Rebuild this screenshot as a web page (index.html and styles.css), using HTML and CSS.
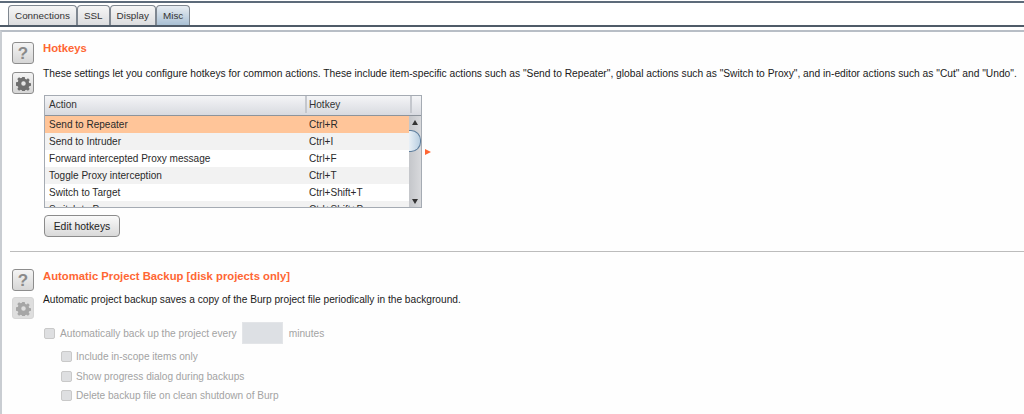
FILE: index.html
```html
<!DOCTYPE html>
<html lang="en">
<head>
<meta charset="utf-8">
<title>Misc settings</title>
<link rel="stylesheet" href="styles.css">
</head>
<body>
<div class="topline"></div>
<nav class="tabs">
  <span class="tab">Connections</span>
  <span class="tab">SSL</span>
  <span class="tab">Display</span>
  <span class="tab active">Misc</span>
</nav>
<main class="panel">
  <section class="section hotkeys">
    <div class="side">
      <div class="iconbtn"><span class="q">?</span></div>
      <div class="iconbtn">
        <svg class="gear" viewBox="0 0 16 16"><path fill-rule="evenodd" d="M6.700 1h2.600l.4 2 1.300.6 1.800-1.100 1.800 1.800-1.100 1.800.6 1.300 2 .4v2.600l-2 .4-.6 1.300 1.100 1.800-1.800 1.800-1.800-1.100-1.300.6-.4 2H6.700l-.4-2-1.300-.6-1.800 1.100-1.800-1.800 1.100-1.800-.6-1.300-2-.4V6.700l2-.4.6-1.300-1.100-1.800 1.800-1.800 1.800 1.100 1.300-.6zM8 5.600a2.400 2.400 0 1 0 0 4.800 2.400 2.400 0 0 0 0-4.800z"/></svg>
      </div>
    </div>
    <div class="content">
      <h2 class="title">Hotkeys</h2>
      <p class="desc">These settings let you configure hotkeys for common actions. These include item-specific actions such as "Send to Repeater", global actions such as "Switch to Proxy", and in-editor actions such as "Cut" and "Undo".</p>
      <div class="tablewrap">
        <div class="table">
          <div class="thead">
            <div class="th c1">Action</div>
            <div class="th c2">Hotkey</div>
            <div class="th c3"></div>
          </div>
          <div class="tbody">
            <div class="rows">
              <div class="row sel"><span class="c1">Send to Repeater</span><span class="c2">Ctrl+R</span></div>
              <div class="row alt"><span class="c1">Send to Intruder</span><span class="c2">Ctrl+I</span></div>
              <div class="row"><span class="c1">Forward intercepted Proxy message</span><span class="c2">Ctrl+F</span></div>
              <div class="row alt"><span class="c1">Toggle Proxy interception</span><span class="c2">Ctrl+T</span></div>
              <div class="row"><span class="c1">Switch to Target</span><span class="c2">Ctrl+Shift+T</span></div>
              <div class="row alt"><span class="c1">Switch to Proxy</span><span class="c2">Ctrl+Shift+P</span></div>
            </div>
            <div class="scrollbar">
              <div class="arrow up"></div>
              <div class="track"><div class="thumb"></div></div>
              <div class="arrow down"></div>
            </div>
          </div>
        </div>
        <div class="marker"></div>
      </div>
      <button class="btn" type="button">Edit hotkeys</button>
    </div>
  </section>
  <hr class="rule">
  <section class="section backup">
    <div class="side tight">
      <div class="iconbtn"><span class="q">?</span></div>
      <div class="iconbtn off">
        <svg class="gear" viewBox="0 0 16 16"><path fill-rule="evenodd" d="M6.700 1h2.600l.4 2 1.300.6 1.800-1.100 1.800 1.800-1.100 1.800.6 1.300 2 .4v2.600l-2 .4-.6 1.300 1.100 1.800-1.800 1.800-1.800-1.100-1.300.6-.4 2H6.700l-.4-2-1.300-.6-1.800 1.100-1.800-1.800 1.100-1.800-.6-1.300-2-.4V6.700l2-.4.6-1.300-1.100-1.800 1.800-1.800 1.800 1.100 1.300-.6zM8 5.600a2.400 2.400 0 1 0 0 4.800 2.400 2.400 0 0 0 0-4.800z"/></svg>
      </div>
    </div>
    <div class="content">
      <h2 class="title">Automatic Project Backup [disk projects only]</h2>
      <p class="desc short">Automatic project backup saves a copy of the Burp project file periodically in the background.</p>
      <div class="opt first"><span class="check"></span><span>Automatically back up the project every</span><span class="field"></span><span>minutes</span></div>
      <div class="opt sub"><span class="check"></span><span>Include in-scope items only</span></div>
      <div class="opt sub"><span class="check"></span><span>Show progress dialog during backups</span></div>
      <div class="opt sub"><span class="check"></span><span>Delete backup file on clean shutdown of Burp</span></div>
    </div>
  </section>
</main>
</body>
</html>
```

FILE: styles.css
```css
* { box-sizing: border-box; }
html, body { margin: 0; height: 414px; overflow: hidden; }
body {
  background: #fff;
  font-family: "Liberation Sans", Arial, sans-serif;
  font-size: 10.05px;
  color: #222;
}
.topline { height: 3px; background: linear-gradient(#fff 0 1px, #5d6b7a 1px 3px); }
.tabs {
  display: flex;
  height: 24px;
  padding: 2px 0 0 8px;
  border-bottom: 2px solid #4f5b68;
}
.tab {
  display: flex;
  align-items: center;
  padding: 0 6px;
  height: 20px;
  font-size: 9.9px;
  border: 1px solid #7f8790;
  border-bottom: 0;
  border-radius: 4px 4px 0 0;
  background: linear-gradient(#f6f6f6, #dcdddf);
  color: #333;
}
.tab.active { background: linear-gradient(#e8edf2, #a9c0d4); }
.panel {
  margin-top: 3px;
  height: 384px;
  border-top: 2px solid #b8bec6;
  border-left: 2px solid #c9cdd2;
  background: #fefefe;
  padding: 0 0 0 8px;
}
.section { display: flex; }
.hotkeys { padding-top: 10px; height: 219px; }
.backup { padding-top: 17px; }
.side {
  width: 24px;
  margin-right: 9px;
  padding-left: 2px;
  display: flex;
  flex-direction: column;
  gap: 8px;
  flex: none;
}
.side.tight { gap: 6px; }
.iconbtn {
  width: 22px;
  height: 22px;
  border: 1px solid #8d8d8d;
  border-radius: 3px;
  background: linear-gradient(#f4f4f4, #d6d6d6);
  display: flex;
  align-items: center;
  justify-content: center;
}
.iconbtn.off { border-color: #d6d6d6; background: #dedede; }
.iconbtn.off .gear { fill: #a6a6a6; }
.q { font-size: 17px; font-weight: bold; color: #8a8a8a; line-height: 1; }
.gear { width: 15px; height: 15px; fill: #6f6f6f; }
.content { flex: 1; min-width: 0; }
.title {
  margin: 0;
  font-size: 11.29px;
  line-height: 14px;
  font-weight: bold;
  color: #ff6633;
}
.hotkeys .title { margin-top: -1px; }
.desc {
  margin: 12px 0 0;
  line-height: 14px;
  font-size: 10.24px;
  color: #1a1a1a;
  white-space: nowrap;
}
.desc.short { margin-top: 10px; font-size: 10.17px; }
.tablewrap { display: flex; margin: 14px 0 0 1px; align-items: center; }
.table {
  width: 378px;
  height: 113px;
  border: 1px solid #a5abb3;
  overflow: hidden;
  flex: none;
}
.thead {
  display: flex;
  height: 20px;
  padding-bottom: 2px;
  background: linear-gradient(#f4f5f7, #d8dae0);
  border-bottom: 1px solid #8d949c;
}
.th { display: flex; align-items: center; padding-left: 4px; color: #333; }
.th + .th { border-left: 2px solid #c4c7cd; }
.thead .c1 { width: 260px; }
.thead .c2 { width: 105px; padding-left: 2px; }
.thead .c3 { flex: 1; }
.tbody { display: flex; height: 92px; }
.rows { width: 364px; overflow: hidden; flex: none; }
.row { display: flex; height: 17px; align-items: center; background: #fff; color: #2a2a2a; white-space: nowrap; }
.row.alt { background: #f2f2f2; }
.row.sel { background: #ffc599; }
.row .c1 { width: 260px; padding-left: 4px; }
.row .c2 { padding-left: 4px; }
.scrollbar {
  flex: 1;
  display: flex;
  flex-direction: column;
  background: linear-gradient(90deg, #c4c6ca, #d8d9dc);
}
.arrow { height: 13px; display: flex; align-items: center; justify-content: center; }
.arrow::before { content: ""; border: 3px solid transparent; }
.up::before { border-bottom: 5px solid #333; border-top: 0; }
.down::before { border-top: 5px solid #333; border-bottom: 0; }
.track { flex: 1; padding-top: 1px; }
.thumb {
  width: 12px;
  height: 22px;
  border: 1px solid #5d7d9c;
  border-left: 0;
  border-radius: 0 10px 10px 0;
  background: linear-gradient(90deg, #e9f0f6, #b9cfe2);
}
.marker {
  width: 0;
  height: 0;
  margin-left: 3px;
  border-left: 6px solid #ff6633;
  border-top: 3.5px solid transparent;
  border-bottom: 3.5px solid transparent;
}
.btn {
  display: block;
  margin: 7px 0 0 1px;
  width: 76px;
  height: 22px;
  padding: 0;
  font: inherit;
  font-size: 10.4px;
  color: #222;
  border: 1px solid #8b8b8b;
  border-radius: 4px;
  background: linear-gradient(#fafafa, #d9d9d9);
}
.rule { margin: 0; border: 0; height: 1px; background: #bcbcbc; }
.opt { display: flex; align-items: center; color: #a3a3a3; white-space: nowrap; font-size: 10.1px; }
.check {
  width: 11px;
  height: 11px;
  margin: 0 5px 0 1px;
  border: 1px solid #c9c9c9;
  border-radius: 2px;
  background: #dedfe1;
  flex: none;
}
.opt.first { height: 22px; margin-top: 15px; font-size: 10.17px; }
.opt.sub { height: 19.4px; padding-left: 17px; }
.opt.sub .check { margin-right: 4px; }
.opt.first + .sub { margin-top: 3px; }
.field {
  width: 41px;
  height: 22px;
  margin: 0 6px 0 5px;
  background: #dde0e4;
  border: 1px solid #e3e5e8;
}
```
